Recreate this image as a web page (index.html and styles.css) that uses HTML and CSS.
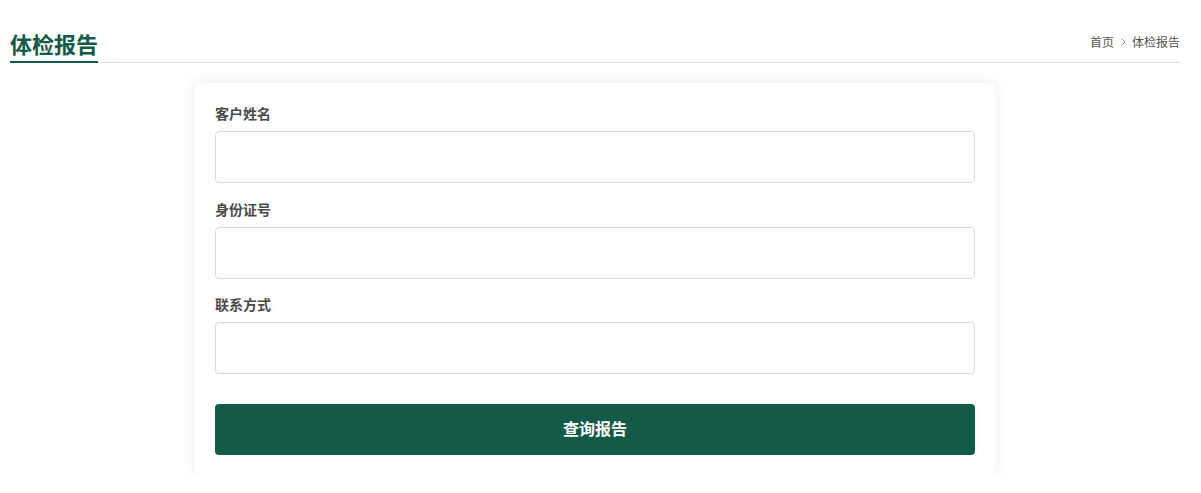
FILE: index.html
```html
<!DOCTYPE html>
<html lang="zh-CN">
<head>
<meta charset="utf-8">
<title>体检报告</title>
<link rel="stylesheet" href="styles.css">
</head>
<body>
<div class="page">
  <div class="header">
    <h1 class="title">体检报告</h1>
    <div class="crumbs">
      <span class="crumb">首页</span>
      <svg class="sep" width="10" height="10" viewBox="0 0 10 10"><path d="M3.5 1.5 L7 5 L3.5 8.5" fill="none" stroke="#888" stroke-width="1"/></svg>
      <span class="crumb">体检报告</span>
    </div>
  </div>
  <form class="card">
    <label class="label">客户姓名</label>
    <input class="input first" type="text">
    <label class="label">身份证号</label>
    <input class="input" type="text">
    <label class="label">联系方式</label>
    <input class="input last" type="text">
    <button class="btn" type="button">查询报告</button>
  </form>
</div>
</body>
</html>
```
FILE: styles.css
```css
html, body {
  margin: 0;
  padding: 0;
  background: #fff;
  font-family: "Noto Sans CJK SC", "Noto Sans", sans-serif;
}
.page {
  width: 1170px;
  margin: 0 0 0 10px;
  padding-top: 28px;
}
.header {
  display: flex;
  justify-content: space-between;
  align-items: flex-start;
  border-bottom: 1px solid #dcdcdc;
}
.title {
  margin: 0 0 -1px 0;
  font-size: 22px;
  line-height: 30px;
  font-weight: 700;
  color: #135a48;
  padding-bottom: 3px;
  border-bottom: 2px solid #135a48;
}
.crumbs {
  display: flex;
  align-items: center;
  gap: 4px;
  font-size: 12px;
  line-height: 28px;
  color: #555;
}
.sep {
  display: block;
}
.card {
  width: 760px;
  margin: 20px auto 0;
  padding: 20px 20px 20px;
  background: #fff;
  border-radius: 4px;
  box-shadow: 0 0 14px rgba(0, 0, 0, 0.08);
  display: flex;
  flex-direction: column;
}
.label {
  font-size: 14px;
  line-height: 20px;
  font-weight: 700;
  color: #4a4a4a;
  margin-bottom: 8px;
}
.input {
  box-sizing: border-box;
  height: 52px;
  border: 1px solid #d9d9d9;
  border-radius: 4px;
  margin: 0 0 15px 0;
  padding: 0 12px;
  font-size: 14px;
  outline: none;
}
.input.first {
  margin-bottom: 16px;
}
.input.last {
  margin-bottom: 30px;
}
.btn {
  height: 51px;
  border: none;
  border-radius: 4px;
  background: #135a48;
  color: #fff;
  font-family: inherit;
  font-size: 16px;
  font-weight: 700;
  padding: 0 0 3px 0;
  cursor: pointer;
}
```
